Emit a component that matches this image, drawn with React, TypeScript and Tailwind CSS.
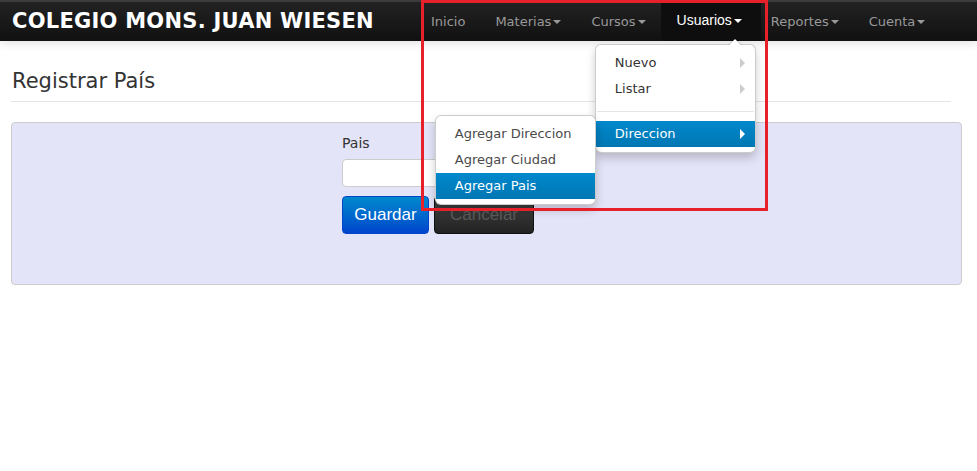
import React from 'react';

const Caret = ({ className = 'border-t-[#999]' }: { className?: string }) => (
  <span className={`ml-[2px] inline-block h-0 w-0 border-x-4 border-t-4 border-x-transparent align-middle ${className}`} />
);

const SubArrow = ({ light }: { light?: boolean }) => (
  <span
    className={`h-0 w-0 border-y-[5px] border-l-[5px] border-y-transparent ${light ? 'border-l-white' : 'border-l-[#cccccc]'}`}
  />
);

const MenuItem = ({ label, arrow, active, muted }: { label: string; arrow?: boolean; active?: boolean; muted?: boolean }) => (
  <div
    className={`flex h-[26px] items-center justify-between pl-[19px] pr-[10px] text-[13px] ${
      active ? 'bg-gradient-to-b from-[#0088cc] to-[#0077b3] text-white' : muted ? 'text-[#4a4a4a]' : 'text-[#333]'
    }`}
  >
    <span>{label}</span>
    {arrow && <SubArrow light={active} />}
  </div>
);

const SubMenu = () => (
  <div className="absolute right-full top-[-6px] w-[161px] rounded-[6px] border border-black/20 bg-white py-[5px] shadow-[0_5px_10px_rgba(0,0,0,0.2)]">
    <MenuItem label="Agregar Direccion" muted />
    <MenuItem label="Agregar Ciudad" muted />
    <MenuItem label="Agregar Pais" active />
  </div>
);

const UsuariosMenu = () => (
  <div className="absolute right-[5px] top-[44px] z-10 w-[161px] rounded-[6px] border border-black/20 bg-white py-[5px] shadow-[0_5px_10px_rgba(0,0,0,0.2)]">
    <span className="absolute -top-[7px] right-[13px] h-0 w-0 border-x-[7px] border-b-[7px] border-x-transparent border-b-black/20" />
    <span className="absolute -top-[6px] right-[14px] h-0 w-0 border-x-[6px] border-b-[6px] border-x-transparent border-b-white" />
    <MenuItem label="Nuevo" arrow />
    <MenuItem label="Listar" arrow />
    <div className="mx-px my-[9px] h-px bg-[#e5e5e5]" />
    <div className="relative">
      <MenuItem label="Direccion" arrow active />
      <SubMenu />
    </div>
  </div>
);

const navItems = ['Inicio', 'Materias', 'Cursos', 'Usuarios', 'Reportes', 'Cuenta'];

export default function App() {
  return (
    <div className="relative h-[471px] w-[977px] overflow-hidden bg-white font-['DejaVu_Sans',sans-serif]">
      <header className="relative z-20 h-[41px] border-t-2 border-[#3c3c3c] bg-gradient-to-b from-[#222] to-[#111] shadow-[0_1px_10px_rgba(0,0,0,0.15)]">
        <div className="ml-[11px] flex h-full w-[940px]">
          <div className="flex w-[405px] items-center pl-px text-[21px] font-bold tracking-[0.25px] text-white">
            COLEGIO MONS. JUAN WIESEN
          </div>
          <ul className="flex h-full">
            {navItems.map((item) =>
              item === 'Usuarios' ? (
                <li key={item} className="relative -mt-[2px] flex h-[41px] items-center bg-[#0e0e0e] pl-[16px] pr-[19px]">
                  <span className="font-['Liberation_Sans',sans-serif] text-[14px] text-white">{item}</span>
                  <Caret className="border-t-white" />
                  <UsuariosMenu />
                </li>
              ) : (
                <li
                  key={item}
                  className={`flex h-full items-center pr-[15px] text-[13px] text-[#999] ${item === 'Reportes' ? 'pl-[10px]' : 'pl-[15px]'}`}
                >
                  {item}
                  {item !== 'Inicio' && <Caret />}
                </li>
              )
            )}
          </ul>
        </div>
      </header>

      <main className="ml-[11px] w-[951px]">
        <div className="mt-[26px] w-[940px] border-b border-[#e5e5e5] pb-[6px] pl-px text-[21px] leading-[28px] text-[#333]">
          Registrar País
        </div>
        <form className="mt-[20px] h-[163px] rounded-[4px] border border-[#cccccc] bg-[#e4e4f8] pl-[330px] pt-[9px]">
          <label className="block text-[14px] leading-[22px] text-[#333]">Pais</label>
          <input className="mt-[5px] block h-[28px] w-[220px] rounded-[4px] border border-[#cccccc] bg-white" />
          <div className="mt-[9px] flex gap-[5px] font-['Liberation_Sans',sans-serif] text-[17px]">
            <button
              type="button"
              className="h-[38px] w-[87px] rounded-[4px] border border-[#0044cc] bg-gradient-to-b from-[#0088cc] to-[#0044cc] text-white"
            >
              Guardar
            </button>
            <button
              type="button"
              className="h-[38px] w-[100px] rounded-[4px] border border-[#111] bg-gradient-to-b from-[#444] to-[#222] text-[#5a5a5a]"
            >
              Cancelar
            </button>
          </div>
        </form>
      </main>

      <div className="pointer-events-none absolute left-[421px] top-0 z-30 h-[211px] w-[347px] border-[3px] border-[#e8202a]" />
    </div>
  );
}
